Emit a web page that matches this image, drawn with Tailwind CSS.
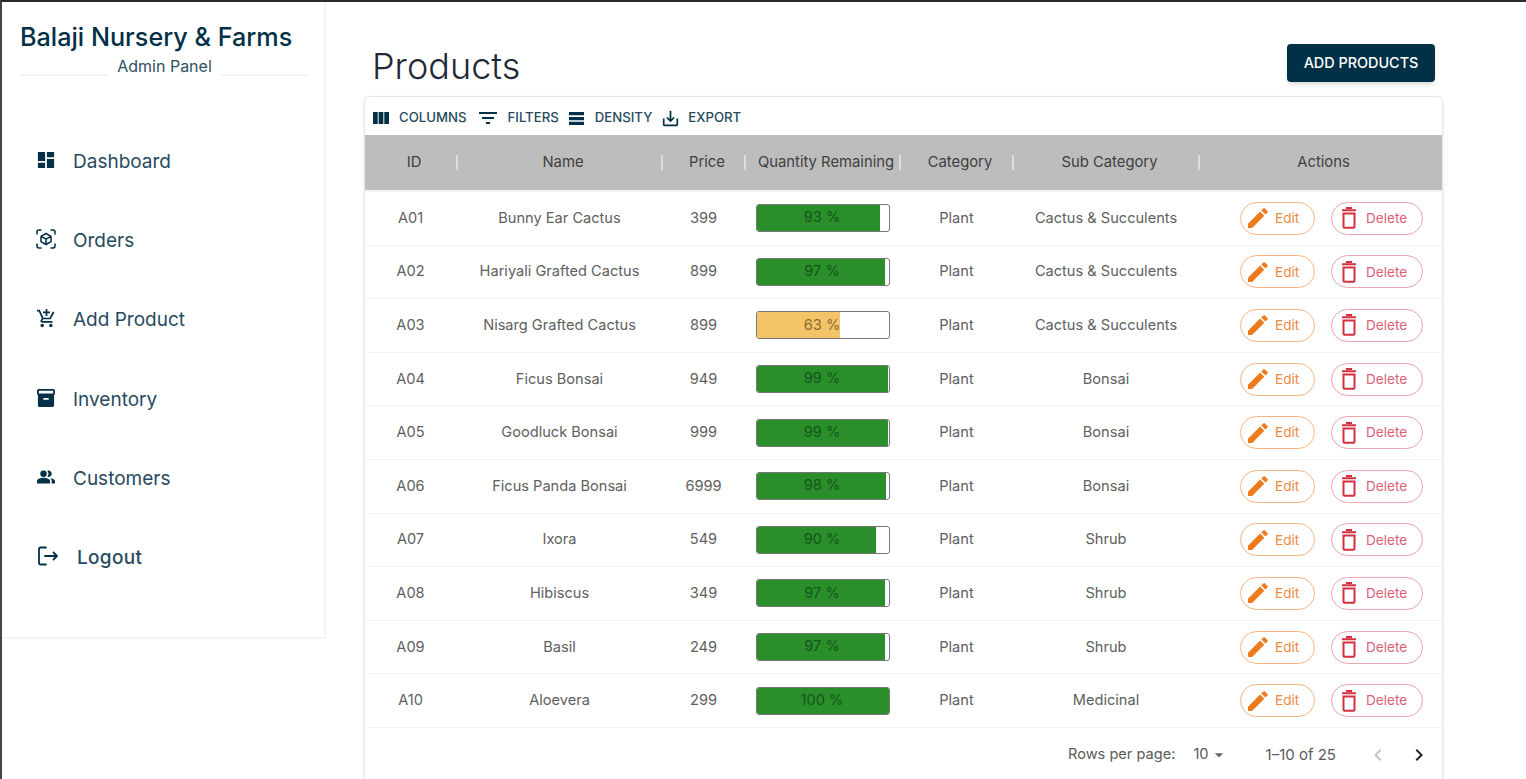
<!doctype html>
<html lang="en">
  <head>
    <meta charset="UTF-8" />
    <meta name="viewport" content="width=device-width, initial-scale=1.0" />
    <title>Products</title>
    <script src="https://cdn.jsdelivr.net/npm/@tailwindcss/browser@4"></script>
  </head>
  <body class="font-['Inter',sans-serif] bg-white">
    <svg class="hidden">
      <symbol id="edit" viewBox="3 3 18.200 18"><path d="M3 17.250V21h3.750L17.810 9.940l-3.750-3.750L3 17.250zM20.710 7.040c.39-.39.39-1.020 0-1.410l-2.340-2.340a.9959.9959 0 0 0-1.410 0l-1.830 1.830 3.750 3.750 1.830-1.830z" fill="currentColor" /></symbol>
      <symbol id="trash" viewBox="0 0 24 24"><path d="M6.500 7.500h11v13.200a1 1 0 0 1-1 1h-9a1 1 0 0 1-1-1zM5 4.300h14M9 2h6" fill="none" stroke="currentColor" stroke-width="2" /></symbol>
    </svg>
    <div class="flex h-[779px] w-full overflow-hidden border-t-2 border-l-2 border-t-[#2a2a2a] border-l-[#444444]">
      <aside class="h-[637px] w-[324px] shrink-0 border-r-2 border-b-2 border-gray-100 text-[#023047]">
        <div class="pt-[19px] pr-[15px] pl-[18px]">
          <h1 class="text-[25.200px] leading-[32px] font-medium whitespace-nowrap">Balaji Nursery &amp; Farms</h1>
          <div class="mt-[2px] flex items-end gap-[9px]">
            <div class="mb-[1px] h-[2px] flex-1 bg-gray-100"></div>
            <span class="text-base leading-[22px] text-[#2f4f62]">Admin Panel</span>
            <div class="mb-[1px] h-[2px] flex-1 bg-gray-100"></div>
          </div>
        </div>
        <nav class="mt-[70px] flex flex-col gap-[49.200px] pl-[35px] text-[19px] leading-[30px] text-[#274a5e]">
          <a class="flex items-center gap-[18px]">
            <svg class="mb-1 h-[18px] w-[18px] text-[#023047]" viewBox="2 2 20 20" fill="currentColor"><path d="M3 13h8V3H3v10zm0 8h8v-6H3v6zm10 0h8V11h-8v10zm0-18v6h8V3h-8z" /></svg>
            <span>Dashboard</span>
          </a>
          <a class="flex items-center gap-[17px]">
            <svg class="mb-1 h-[20px] w-[20px] -translate-x-[1px] text-[#023047]" viewBox="0 0 20 20" fill="none" stroke="currentColor" stroke-width="1.500" stroke-linecap="round"><path d="M1 5V3a2 2 0 0 1 2-2h2M15 1h2a2 2 0 0 1 2 2v2M19 15v2a2 2 0 0 1-2 2h-2M5 19H3a2 2 0 0 1-2-2v-2" /><path d="M10 4.500l5 2.800v5.400l-5 2.800-5-2.800V7.300zM5 7.300l5 2.900 5-2.900M10 10.200v5.300" stroke-linejoin="round" /></svg>
            <span class="-ml-[1px]">Orders</span>
          </a>
          <a class="flex items-center gap-[17px]">
            <svg class="mb-1 h-[19px] w-[19px] text-[#023047]" viewBox="1 1 22 22" fill="currentColor"><path d="M11 9h2V6h3V4h-3V1h-2v3H8v2h3v3zm-4 9c-1.100 0-1.990.9-1.990 2S5.900 22 7 22s2-.9 2-2-.9-2-2-2zm10 0c-1.100 0-1.990.9-1.990 2s.89 2 1.990 2 2-.9 2-2-.9-2-2-2zm-9.830-3.250l.03-.12.9-1.630h7.450c.75 0 1.410-.41 1.750-1.030l3.860-7.010L19.420 4h-.01l-1.100 2-2.760 5H8.530l-.13-.27L6.160 6l-.95-2-.94-2H1v2h2l3.600 7.590-1.350 2.450c-.16.28-.25.61-.25.96 0 1.100.9 2 2 2h12v-2H7.420c-.13 0-.25-.11-.25-.25z" /></svg>
            <span>Add Product</span>
          </a>
          <a class="flex items-center gap-[18px]">
            <svg class="mb-1 h-[18px] w-[18px] text-[#023047]" viewBox="2 2 20 20" fill="currentColor"><path d="M20 2H4c-1 0-2 .9-2 2v3.010c0 .72.43 1.340 1 1.690V20c0 1.100 1.100 2 2 2h14c.9 0 2-.9 2-2V8.700c.57-.35 1-.97 1-1.690V4c0-1.100-1-2-2-2zm-5 12H9v-2h6v2zm5-7H4V4l16-.02V7z" /></svg>
            <span>Inventory</span>
          </a>
          <a class="flex items-center gap-[18px]">
            <svg class="mb-1 h-[18px] w-[18px] text-[#023047]" viewBox="1 3 22 18" fill="currentColor"><path d="M16.670 13.130C18.040 14.060 19 15.320 19 17v3h4v-3c0-2.180-3.570-3.470-6.330-3.870z" /><circle cx="9" cy="8" r="4" /><path d="M15 12c2.210 0 4-1.790 4-4s-1.790-4-4-4c-.47 0-.91.1-1.330.24C14.500 5.270 15 6.580 15 8s-.5 2.730-1.330 3.760c.42.14.86.24 1.330.24zM9 13c-2.670 0-8 1.340-8 4v3h16v-3c0-2.660-5.330-4-8-4z" /></svg>
            <span>Customers</span>
          </a>
          <a class="flex items-center gap-[18px]">
            <svg class="mb-1 h-[22px] w-[22px] text-[#023047]" viewBox="0 0 22 22" fill="none" stroke="currentColor" stroke-width="1.800" stroke-linecap="round" stroke-linejoin="round"><path d="M9 2.500H3.500a1.500 1.500 0 0 0-1.500 1.500v14a1.500 1.500 0 0 0 1.500 1.500H9M8 11h12M16.500 7.500L20 11l-3.500 3.500" /></svg>
            <span class="font-medium tracking-[0.3px]">Logout</span>
          </a>
        </nav>
      </aside>

      <main class="flex-1 pl-[38px]">
        <div class="flex w-[1070px] items-start justify-between pt-[42px] pl-[8px]">
          <h2 class="text-[36px] leading-[44px] font-light text-[#1f2937]">Products</h2>
          <button class="mr-[-1px] h-[38px] w-[148px] rounded bg-[#023047] text-[14.400px] font-medium text-white shadow-md">ADD PRODUCTS</button>
        </div>

        <section class="mt-[8px] w-[1079px] overflow-hidden rounded-t-md border border-b-0 border-gray-200 shadow-sm">
          <div class="flex h-[38px] items-center pt-[4px] pl-[8px] text-[13.200px] font-medium text-[#274a5e]">
            <svg class="h-[12px] w-[16px] text-[#023047]" viewBox="4 5 17 13" preserveAspectRatio="none" fill="currentColor"><path d="M10 18h5V5h-5v13zm-6 0h5V5H4v13zM16 5v13h5V5h-5z" /></svg>
            <span class="ml-[10px]">COLUMNS</span>
            <svg class="ml-[9px] h-[24px] w-[24px] text-[#023047]" viewBox="0 0 24 24" fill="currentColor"><path d="M10 18h4v-2h-4v2zM3 6v2h18V6H3zm3 7h12v-2H6v2z" /></svg>
            <span class="ml-[8px]">FILTERS</span>
            <svg class="ml-[10px] h-[13px] w-[15px] text-[#023047]" viewBox="3 4 18 16" preserveAspectRatio="none" fill="currentColor"><path d="M21 8H3V4h18v4zm0 2H3v4h18v-4zm0 6H3v4h18v-4z" /></svg>
            <span class="ml-[11px]">DENSITY</span>
            <svg class="ml-[10px] h-[17px] w-[17px] text-[#023047]" viewBox="2 2 20 20" fill="currentColor"><path d="M19 12v7H5v-7H3v7c0 1.100.9 2 2 2h14c1.100 0 2-.9 2-2v-7h-2zm-6 .67l2.590-2.580L17 11.500l-5 5-5-5 1.410-1.410L11 12.670V3h2z" /></svg>
            <span class="ml-[9px]">EXPORT</span>
          </div>

          <div class="grid h-[55px] grid-cols-[93px_205px_83px_155px_113px_186px_1fr] items-center bg-[#bdbdbd] text-[14.800px] text-[#404040]">
            <div class="relative pl-[5px] text-center">ID<i class="absolute top-0 right-0 bottom-0 my-auto h-[15px] w-[2px] bg-[#dddddd]"></i></div>
            <div class="relative pl-[5px] text-center">Name<i class="absolute top-0 right-0 bottom-0 my-auto h-[15px] w-[2px] bg-[#dddddd]"></i></div>
            <div class="relative pl-[5px] text-center">Price<i class="absolute top-0 right-0 bottom-0 my-auto h-[15px] w-[2px] bg-[#dddddd]"></i></div>
            <div class="relative pl-[5px] text-center whitespace-nowrap">Quantity Remaining<i class="absolute top-0 right-0 bottom-0 my-auto h-[15px] w-[2px] bg-[#dddddd]"></i></div>
            <div class="relative pl-[5px] text-center">Category<i class="absolute top-0 right-0 bottom-0 my-auto h-[15px] w-[2px] bg-[#dddddd]"></i></div>
            <div class="relative pl-[5px] text-center">Sub Category<i class="absolute top-0 right-0 bottom-0 my-auto h-[15px] w-[2px] bg-[#dddddd]"></i></div>
            <div class="pl-[5px] text-center">Actions</div>
          </div>
          <div class="h-[2px] bg-gray-100"></div>

          <div id="rows"></div>

          <div class="flex h-[54px] items-center pl-[703px] text-[14.600px] text-[#5a5a5a]">
            <span>Rows per page:</span>
            <span class="ml-[18px]">10</span>
            <svg class="h-[20px] w-[20px] text-[#666666]" viewBox="0 0 24 24" fill="currentColor"><path d="M7 10l5 5 5-5z" /></svg>
            <span class="ml-[37px] text-[15px]">1–10 of 25</span>
            <svg class="ml-[30px] h-[24px] w-[24px] text-[#c4c4c4]" viewBox="0 0 24 24" fill="currentColor"><path d="M15.410 7.410 14 6l-6 6 6 6 1.410-1.410L10.830 12z" /></svg>
            <svg class="ml-[17px] h-[24px] w-[24px] text-[#222222]" viewBox="0 0 24 24" fill="currentColor"><path d="M10 6 8.590 7.410 13.170 12l-4.580 4.590L10 18l6-6z" /></svg>
          </div>
        </section>
      </main>
    </div>

    <script>
      const products = [
        ["A01", "Bunny Ear Cactus", 399, 93, "Cactus & Succulents"],
        ["A02", "Hariyali Grafted Cactus", 899, 97, "Cactus & Succulents"],
        ["A03", "Nisarg Grafted Cactus", 899, 63, "Cactus & Succulents"],
        ["A04", "Ficus Bonsai", 949, 99, "Bonsai"],
        ["A05", "Goodluck Bonsai", 999, 99, "Bonsai"],
        ["A06", "Ficus Panda Bonsai", 6999, 98, "Bonsai"],
        ["A07", "Ixora", 549, 90, "Shrub"],
        ["A08", "Hibiscus", 349, 97, "Shrub"],
        ["A09", "Basil", 249, 97, "Shrub"],
        ["A10", "Aloevera", 299, 100, "Medicinal"],
      ];

      document.querySelector("#rows").innerHTML = products
        .map(([id, name, price, qty, sub]) => {
          const fill = qty >= 80 ? "bg-[#2a8f2a]" : "bg-[#f3c468]";
          return `
          <div class="grid h-[53.600px] grid-cols-[93px_205px_83px_155px_113px_186px_1fr] items-center border-b border-gray-100 text-[14.600px] text-[#606060]">
            <div class="pt-[1px] pr-[2px] text-center">${id}</div>
            <div class="pt-[1px] pr-[2px] text-center">${name}</div>
            <div class="pt-[1px] pr-[2px] text-center">${price}</div>
            <div class="pl-[10px]">
              <div class="relative h-[28px] w-[134px] overflow-hidden rounded-[3px] border border-[#777777]">
                <div class="h-full ${fill}" style="width: ${qty}%"></div>
                <div class="absolute inset-0 flex items-center justify-center pr-[2px] ${qty >= 80 ? "text-[#14561a]" : "text-[#8a6a30]"}">${qty} %</div>
              </div>
            </div>
            <div class="pt-[1px] pr-[2px] text-center">Plant</div>
            <div class="pt-[1px] pr-[2px] text-center">${sub}</div>
            <div class="flex gap-[16px] pl-[40px] text-[13.600px]">
              <button class="flex h-[33px] w-[75px] items-center rounded-full border border-[#f5b581] pl-[7px] text-[#ec8a3c]">
                <svg class="h-[20px] w-[20px] text-[#ed7a1c]"><use href="#edit" /></svg>
                <span class="ml-[7px]">Edit</span>
              </button>
              <button class="flex h-[33px] w-[92px] items-center rounded-full border border-[#e9a5b0] pl-[5px] text-[#dc5f78]">
                <svg class="h-[24px] w-[24px] text-[#d32f3f]"><use href="#trash" /></svg>
                <span class="ml-[5px]">Delete</span>
              </button>
            </div>
          </div>`;
        })
        .join("");
    </script>
  </body>
</html>
